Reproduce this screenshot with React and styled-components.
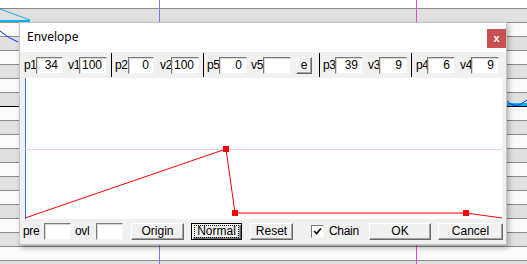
import React from "react";
import styled, { createGlobalStyle } from "styled-components";

const Global = createGlobalStyle`
  html, body { margin: 0; padding: 0; background: #fff; }
  body { font-family: "Liberation Sans", Arial, sans-serif; font-size: 12px; }
`;

const Screen = styled.div`
  position: relative;
  width: 527px;
  height: 264px;
  overflow: hidden;
  background: #fff;
`;

const Sheet = styled.div`
  display: flex;
  flex-direction: column;
  padding-top: 8px;
`;

const SheetRow = styled.div`
  height: 13px;
  flex: none;
  border-top: 1px solid ${(p) => p.$line || "#8a8a8a"};
  background: ${(p) => (p.$shade ? "#e0e0e0" : "#fafafa")};
`;

const SheetArt = styled.svg`
  position: absolute;
  left: 0;
  top: 0;
`;

const Dialog = styled.div`
  position: absolute;
  left: 19px;
  top: 22px;
  width: 488px;
  height: 223px;
  box-sizing: border-box;
  display: flex;
  flex-direction: column;
  background: #f0f0f0;
  border: 1px solid #c4c4c4;
  box-shadow: 2px 3px 5px rgba(0, 0, 0, 0.28);
`;

const TitleBar = styled.div`
  height: 29px;
  flex: none;
  display: flex;
  align-items: center;
  justify-content: space-between;
  background: #fff;
  padding-left: 7px;
`;

const Title = styled.span`
  font-family: "Noto Sans", "Open Sans", sans-serif;
  font-size: 12px;
  color: #000;
  margin-top: -2px;
`;

const CloseButton = styled.div`
  width: 19px;
  height: 19px;
  align-self: flex-start;
  margin-top: 6px;
  background: #c75050;
  color: #fff;
  font-family: "Liberation Sans", Arial, sans-serif;
  font-weight: bold;
  font-size: 11px;
  display: flex;
  align-items: center;
  justify-content: center;
  line-height: 1;
`;

const Toolbar = styled.div`
  height: 26px;
  flex: none;
  display: flex;
  align-items: center;
  padding-left: 4px;
`;

const Label = styled.span`
  width: ${(p) => p.$w}px;
  margin-left: ${(p) => p.$ml || 0}px;
  flex: none;
  font-size: 12px;
  color: #000;
  white-space: nowrap;
  letter-spacing: -0.3px;
`;

const Field = styled.div`
  width: ${(p) => p.$w}px;
  height: 17px;
  margin-left: ${(p) => p.$ml || 0}px;
  flex: none;
  box-sizing: border-box;
  background: #fff;
  border-style: solid;
  border-width: 1px;
  border-color: #7a7a7a #f4f4f4 #f4f4f4 #7a7a7a;
  box-shadow: inset 1px 1px 0 #d8d8d8;
  font-size: 12px;
  line-height: 15px;
  text-align: right;
  padding-right: 4px;
  color: #000;
`;

const Separator = styled.div`
  width: 1px;
  height: 24px;
  margin-left: ${(p) => p.$ml}px;
  flex: none;
  background: #000;
`;

const Button = styled.div`
  width: ${(p) => p.$w}px;
  height: 17px;
  margin-left: ${(p) => p.$ml || 0}px;
  flex: none;
  box-sizing: border-box;
  display: flex;
  align-items: center;
  justify-content: center;
  background: #f0f0f0;
  border-style: solid;
  border-width: 1px;
  border-color: ${(p) => (p.$default ? "#000" : "#fff #696969 #696969 #fff")};
  box-shadow: ${(p) =>
    p.$default
      ? "inset 1px 1px 0 #fff, inset -1px -1px 0 #696969, inset -2px -2px 0 #a0a0a0"
      : "inset -1px -1px 0 #a0a0a0"};
  font-size: 12px;
  color: #000;
`;

const FocusText = styled.span`
  outline: 1px dotted #000;
  outline-offset: 0px;
  padding: 0 2px;
  line-height: 11px;
`;

const Graph = styled.div`
  height: 141px;
  flex: none;
  margin: 0 4px 0 5px;
  background: #fff;
`;

const BottomBar = styled.div`
  flex: 1;
  display: flex;
  align-items: center;
  padding-left: 3px;
  padding-bottom: 1px;
`;

const CheckBox = styled.div`
  width: 13px;
  height: 13px;
  margin-left: ${(p) => p.$ml}px;
  flex: none;
  box-sizing: border-box;
  background: #fff;
  border: 1px solid;
  border-color: #7a7a7a #f4f4f4 #f4f4f4 #7a7a7a;
  display: flex;
  align-items: center;
  justify-content: center;
`;

const tools = [
  { kind: "field", label: "p1", ml: 0, lw: 12, w: 27, v: "34" },
  { kind: "field", label: "v1", ml: 5, lw: 11, w: 28, v: "100" },
  { kind: "sep", ml: 4 },
  { kind: "field", label: "p2", ml: 3, lw: 13, w: 26, v: "0" },
  { kind: "field", label: "v2", ml: 6, lw: 11, w: 28, v: "100" },
  { kind: "sep", ml: 4 },
  { kind: "field", label: "p5", ml: 3, lw: 12, w: 28, v: "0" },
  { kind: "field", label: "v5", ml: 4, lw: 12, w: 28, v: "" },
  { kind: "btn", label: "e", ml: 5, w: 16 },
  { kind: "sep", ml: 7 },
  { kind: "field", label: "p3", ml: 3, lw: 12, w: 28, v: "39" },
  { kind: "field", label: "v3", ml: 5, lw: 11, w: 28, v: "9" },
  { kind: "sep", ml: 4 },
  { kind: "field", label: "p4", ml: 4, lw: 11, w: 28, v: "6" },
  { kind: "field", label: "v4", ml: 5, lw: 11, w: 28, v: "9" },
];

const points = [
  [0, 140],
  [201, 71],
  [210, 135],
  [441, 135],
  [477, 140],
];

function SheetBackground() {
  const rows = [];
  for (let i = 0; i < 19; i++) {
    rows.push(<SheetRow key={i} $shade={i % 2 === 0} $line={i === 7 ? "#000" : undefined} />);
  }
  return (
    <>
      <Sheet>{rows}</Sheet>
      <SheetArt width="527" height="264">
        <line x1="159.5" y1="0" x2="159.5" y2="264" stroke="#7a7ae8" />
        <line x1="416.5" y1="0" x2="416.5" y2="264" stroke="#e048e0" />
        <line x1="0" y1="9" x2="30" y2="20" stroke="#1aa8e8" />
        <rect x="0" y="20" width="30" height="2" fill="#00b4f0" />
        <path d="M0 31 Q8 38 18 42" stroke="#1030e0" fill="none" />
        <rect x="507" y="103" width="20" height="3" fill="#00b4f0" />
        <path d="M507 101 Q514 108 521 104 L527 100" stroke="#1030e0" fill="none" />
      </SheetArt>
    </>
  );
}

function EnvelopeGraph() {
  return (
    <Graph>
      <svg width="477" height="141">
        <line x1="0.5" y1="0" x2="0.5" y2="141" stroke="#2a7de1" />
        <line x1="0" y1="71.5" x2="477" y2="71.5" stroke="#f7cdf2" />
        <polyline
          points={points.map((p) => p.join(",")).join(" ")}
          fill="none"
          stroke="#ff0000"
          strokeWidth="1"
        />
        {points.slice(1, 4).map(([x, y]) => (
          <rect key={x} x={x - 3} y={y - 3} width="6" height="6" fill="#ff0000" />
        ))}
      </svg>
    </Graph>
  );
}

export default function App() {
  return (
    <Screen>
      <Global />
      <SheetBackground />
      <Dialog>
        <TitleBar>
          <Title>Envelope</Title>
          <CloseButton>x</CloseButton>
        </TitleBar>
        <Toolbar>
          {tools.map((t, i) => {
            if (t.kind === "sep") return <Separator key={i} $ml={t.ml} />;
            if (t.kind === "btn")
              return (
                <Button key={i} $w={t.w} $ml={t.ml}>
                  {t.label}
                </Button>
              );
            return (
              <React.Fragment key={i}>
                <Label $w={t.lw} $ml={t.ml}>
                  {t.label}
                </Label>
                <Field $w={t.w}>{t.v}</Field>
              </React.Fragment>
            );
          })}
        </Toolbar>
        <EnvelopeGraph />
        <BottomBar>
          <Label $w={21}>pre</Label>
          <Field $w={27} />
          <Label $w={21} $ml={4}>ovl</Label>
          <Field $w={27} />
          <Button $w={53} $ml={8}>Origin</Button>
          <Button $w={51} $ml={7} $default>
            <FocusText>Normal</FocusText>
          </Button>
          <Button $w={43} $ml={8}>Reset</Button>
          <CheckBox $ml={18}>
            <svg width="9" height="9" viewBox="0 0 9 9">
              <path d="M1 4 L3.5 6.5 L8 1.5" stroke="#000" strokeWidth="1.6" fill="none" />
            </svg>
          </CheckBox>
          <Label $w={36} $ml={5}>Chain</Label>
          <Button $w={62} $ml={4}>OK</Button>
          <Button $w={65} $ml={7}>Cancel</Button>
        </BottomBar>
      </Dialog>
    </Screen>
  );
}
